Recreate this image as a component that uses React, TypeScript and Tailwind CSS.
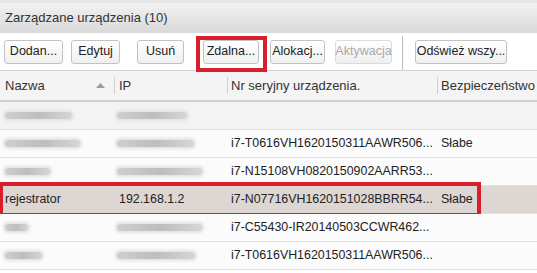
const font = { fontFamily: '"Liberation Sans", Arial, sans-serif' };

const buttons = [
  { label: "Dodan...", cls: "ml-[4px] w-[59px]" },
  { label: "Edytuj", cls: "ml-[8px] w-[49px]" },
  { label: "Usuń", cls: "ml-[17px] w-[47px]" },
  { label: "Zdalna...", cls: "ml-[19px] w-[56px]", marked: true },
  { label: "Alokacj...", cls: "ml-[11px] w-[55px]" },
  { label: "Aktywacja", cls: "ml-[10px] w-[57px]", disabled: true },
];

// blurred (redacted) cells are drawn as soft smudges of the given width
const rows = [
  { nameW: 67, ipW: 70, serial: "", sec: "" },
  { nameW: 75, ipW: 77, serial: "i7-T0616VH1620150311AAWR506...", sec: "Słabe" },
  { nameW: 45, ipW: 85, serial: "i7-N15108VH0820150902AARR53...", sec: "" },
  { name: "rejestrator", ip: "192.168.1.2", serial: "i7-N07716VH1620151028BBRR54...", sec: "Słabe", active: true },
  { nameW: 23, ipW: 85, serial: "i7-C55430-IR20140503CCWR462...", sec: "" },
  { nameW: 37, ipW: 78, serial: "i7-T0616VH1620150311AAWR506...", sec: "" },
];

function Smudge({ w }: { w: number }) {
  return (
    <div
      className="h-[7px] rounded-[3px] bg-gradient-to-r from-[#cfcfcf] via-[#bdbdbd] to-[#d6d6d6] shadow-[0_0_3px_2px_#e2e2e2]"
      style={{ width: w }}
    />
  );
}

export default function App() {
  return (
    <div className="w-[537px] h-[273px] overflow-hidden bg-white text-[13px] text-[#222]" style={font}>
      {/* title bar */}
      <div className="h-[33px] border-t-[3px] border-[#e6e6e6] bg-gradient-to-b from-[#f2f2f2] to-[#d9d9d9] flex items-center pl-[5px] text-[#333]">
        Zarządzane urządzenia (10)
      </div>

      {/* toolbar */}
      <div className="h-[38px] border-b border-[#d0d0d0] flex items-center text-[12.5px] whitespace-nowrap">
        {buttons.map((b) => (
          <div key={b.label} className={`relative h-[24px] ${b.cls}`}>
            <div
              className={`h-full rounded-[3px] border flex items-center justify-center bg-gradient-to-b from-white to-[#efefef] ${
                b.disabled ? "border-[#dcdcdc] text-[#a8a8a8]" : "border-[#c2c2c2] text-[#222]"
              }`}
            >
              {b.label}
            </div>
            {b.marked && (
              <div className="absolute -left-[7px] -right-[8px] -top-[4px] -bottom-[8px] border-[4px] border-[#d7202b]" />
            )}
          </div>
        ))}
        <div className="ml-[10px] w-px self-stretch bg-[#bdbdbd] mt-[3px]" />
        <div className="ml-[12px] w-[92px] h-[24px] rounded-[3px] border border-[#c2c2c2] flex items-center justify-center bg-gradient-to-b from-white to-[#efefef]">
          Odśwież wszy...
        </div>
      </div>

      {/* header */}
      <div className="h-[31px] bg-[#f4f4f4] border-b-2 border-[#cfcfcf] grid grid-cols-[114px_113px_210px_100px] items-center text-[#333] whitespace-nowrap">
        <div className="flex items-center pl-[5px] pr-[9px]">
          <span>Nazwa</span>
          <svg className="ml-auto" width="9" height="5" viewBox="0 0 9 5">
            <path d="M0 5 L4.5 0 L9 5 Z" fill="#9a9a9a" />
          </svg>
        </div>
        <div className="flex items-center border-l border-[#cfcfcf] pl-[4px] h-[17px]">IP</div>
        <div className="flex items-center border-l border-[#cfcfcf] pl-[3px] h-[17px]">Nr seryjny urządzenia.</div>
        <div className="flex items-center border-l border-[#cfcfcf] pl-[3px] h-[17px]">Bezpieczeństwo</div>
      </div>

      {/* rows */}
      {rows.map((r, i) => (
        <div
          key={i}
          className={`relative h-[28px] grid grid-cols-[114px_113px_210px_100px] items-center border-b border-[#e2e2e2] text-[12.4px] whitespace-nowrap ${
            r.active ? "bg-[#ddd6d2]" : i === 0 ? "bg-[#f3f3f3]" : "bg-[#fbfbfb]"
          }`}
        >
          <div className="pl-[5px]">{r.active ? r.name : <Smudge w={r.nameW ?? 0} />}</div>
          <div className="pl-[3px]">{r.active ? <span className="pl-[2px]">{r.ip}</span> : <Smudge w={r.ipW ?? 0} />}</div>
          <div className="pl-[4px]">{r.serial}</div>
          <div className="pl-[4px]">{r.sec}</div>
          {r.active && (
            <div className="absolute -left-[1px] w-[482px] -top-[4px] -bottom-[4px] border-[4px] border-[#d7202b]" />
          )}
        </div>
      ))}
    </div>
  );
}
